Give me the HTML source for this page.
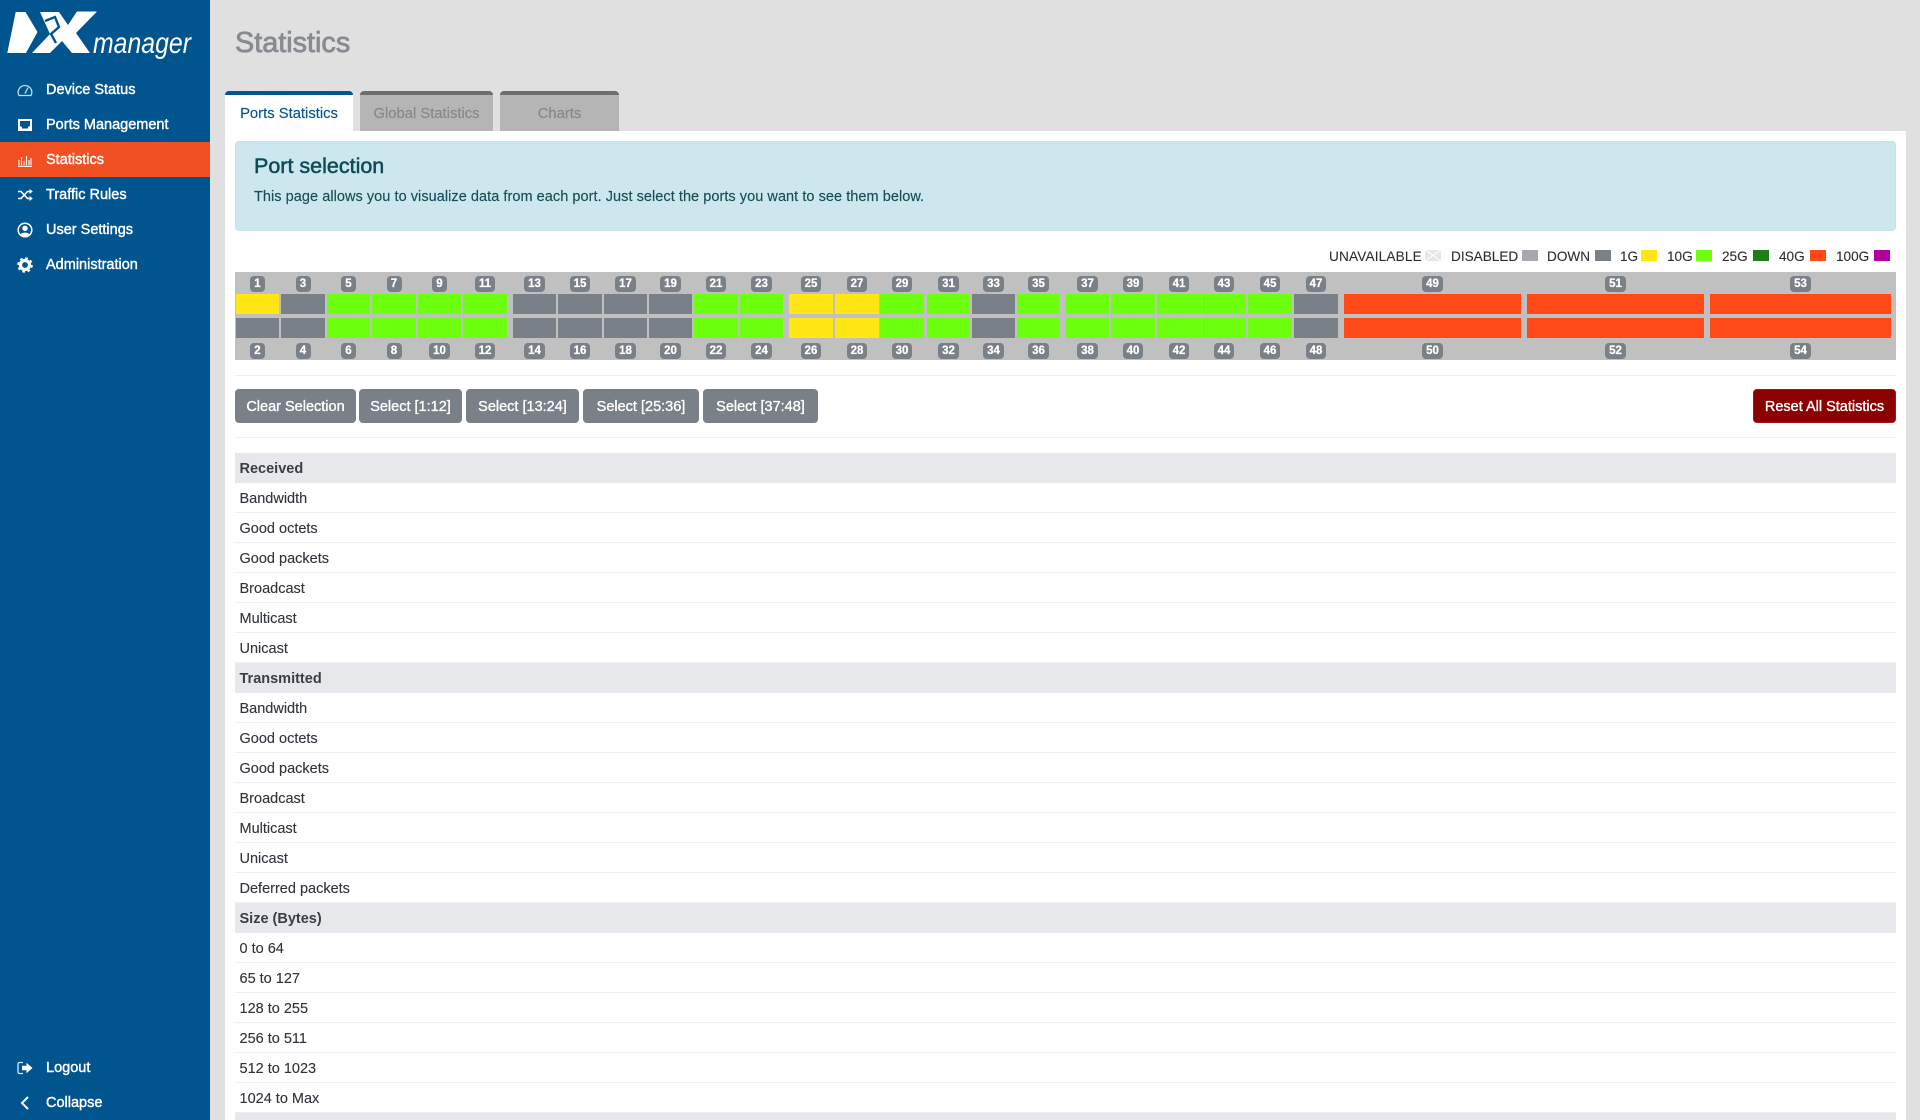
<!DOCTYPE html>
<html lang="en">
<head>
<meta charset="utf-8">
<title>Statistics</title>
<style>
*{box-sizing:border-box;margin:0;padding:0}
html,body{width:1920px;height:1120px;overflow:hidden;background:#e0e0e0;font-family:"Liberation Sans",sans-serif;font-size:14.5px;color:#2b3036}
#root{position:relative;width:1920px;height:1120px;overflow:hidden;background:#e0e0e0}
.abs{position:absolute}
#side{position:absolute;left:0;top:0;width:210px;height:1120px;background:#00558f}
.nav{position:absolute;left:0;width:210px;height:35px;line-height:37px;color:#fff;padding-left:46px;-webkit-text-stroke:.4px #fff;overflow:hidden}
.nav.on{background:#f15022}
.nav svg{position:absolute;left:17px;top:10px;width:16px;height:16px}
#title{position:absolute;left:235px;top:25px;font-size:28.8px;line-height:36px;color:#888c92;-webkit-text-stroke:.8px #888c92}
.tab{position:absolute;top:91px;height:40px;border-top:4px solid #6e6e6e;border-radius:4px 4px 0 0;background:#b5b5b5;color:#878787;text-align:center;line-height:38px;font-size:14.8px;-webkit-text-stroke:.15px #878787}
.tab.on{background:#fff;border-top-color:#00568f;color:#00568f;-webkit-text-stroke:.15px #00568f}
#panel{position:absolute;left:225px;top:131px;width:1681px;height:989px;background:#fff}
#alert{position:absolute;left:235px;top:141px;width:1661px;height:90px;background:#cce8ee;border:1px solid #bfe4ea;border-radius:4px;color:#1a4c58}
#alert h4{position:absolute;left:18px;top:10px;font-size:21.5px;line-height:28px;font-weight:400;color:#0c4a56;-webkit-text-stroke:.5px #0c4a56;white-space:nowrap}
#alert p{position:absolute;left:18px;top:46px;line-height:18px;white-space:nowrap;letter-spacing:.05px;-webkit-text-stroke:.15px #1a4c58}
.lg{position:absolute;top:248px;font-size:13.6px;line-height:18px;color:#2a2e33;white-space:nowrap;-webkit-text-stroke:.1px #2a2e33}
.sw{position:absolute;top:250px;width:16px;height:11px}
#bar{position:absolute;left:235px;top:272px;width:1661px;height:88px;background:#c0c0c0}
.c{position:absolute;top:276px;height:84px;display:flex;flex-direction:column;align-items:center}
.c b{display:block;height:16px;min-width:15px;padding:0 4px;line-height:16px;background:#7a8088;border-radius:4px;color:#fff;font-size:11.5px;font-weight:700;text-align:center;-webkit-text-stroke:.25px #fff}
.c i{display:block;width:100%;height:20px;background:#7a8088}
.c i.a{margin-top:2px}
.c i.z{margin-top:4px}
.c b.z{margin-top:5px}
.c i.g{background:#6cff0e}
.c i.y{background:#ffe614}
.c i.o{background:#ff4a17}
.hr{position:absolute;left:235px;width:1661px;height:1px;background:#edeef0}
.btn{position:absolute;top:389px;height:34px;line-height:36px;background:#7a8088;border-radius:4px;color:#fff;text-align:center;white-space:nowrap;font-size:14.5px;-webkit-text-stroke:.35px #fff;overflow:hidden}
.btn.r{background:#8b0000;border:1px solid #a3141c;line-height:34px}
#tbl{position:absolute;left:235px;top:453px;width:1661px}
#tbl div{height:30px;line-height:32px;padding-left:4.5px;border-bottom:1px solid #eceef1;color:#2f343a;-webkit-text-stroke:.12px #2f343a;overflow:hidden}
#tbl div.h{background:#e6e8ec;border-bottom:0;font-weight:700;color:#3a3f45;-webkit-text-stroke:0}
</style>
</head>
<body>
<div id="root">
<div id="side">
<svg class="abs" style="left:0;top:0" width="210" height="70" viewBox="0 0 210 70">
<polygon fill="#fff" points="15.7,12 25.500,12 37.500,32 26,53 7.300,53"/>
<polygon fill="#fff" points="40,12 59,12 68,25 77,11.500 97,11.500 76,33 90,53 72,53 62,41 50,53 32,53 50,34"/>
<polyline fill="none" stroke="#00558f" stroke-width="2.400" points="45,21 55,17 59,27 51,34 56,43"/>
<text x="93" y="53" font-family="Liberation Sans" font-style="italic" font-size="30" fill="#fff" textLength="98" lengthAdjust="spacingAndGlyphs">manager</text>
</svg>
<div class="nav" style="top:72px"><svg viewBox="0 0 16 16"><path d="M2 13.500A6.800 6.800 0 1 1 14 13.500ZM8 11.500 11 5.500" fill="none" stroke="#c6d9e8" stroke-width="1.300"/></svg>Device Status</div>
<div class="nav" style="top:107px"><svg viewBox="0 0 16 16"><rect x="1" y="2" width="14" height="12" fill="#fff"/><path d="M3 4h10v5l-2 1v1.500H5V10L3 9z" fill="#00558f"/></svg>Ports Management</div>
<div class="nav on" style="top:142px"><svg viewBox="0 0 16 16"><path d="M1 14.300h14M2 13V8M4.500 13V5M7 13V9M9.500 13V4M12 13V8M14 13V6" fill="none" stroke="#fff" stroke-width="1.100"/></svg>Statistics</div>
<div class="nav" style="top:177px"><svg viewBox="0 0 16 16"><path d="M1 4.500h3l6.500 7H13M1 11.500h3l6.500-7H13" fill="none" stroke="#fff" stroke-width="1.600"/><path d="M12.500 2l3.300 2.500-3.300 2.500zM12.500 9l3.300 2.500-3.300 2.500z" fill="#fff"/></svg>Traffic Rules</div>
<div class="nav" style="top:212px"><svg viewBox="0 0 16 16"><circle cx="8" cy="8" r="6.800" fill="none" stroke="#fff" stroke-width="1.500"/><circle cx="8" cy="6.300" r="2.700" fill="#fff"/><path d="M3.500 12.500C4.500 10 11.500 10 12.500 12.500L8 15z" fill="#fff"/></svg>User Settings</div>
<div class="nav" style="top:247px"><svg viewBox="0 0 16 16"><circle cx="8" cy="8" r="4.500" fill="none" stroke="#fff" stroke-width="3.200"/><circle cx="8" cy="8" r="6.600" fill="none" stroke="#fff" stroke-width="2.400" stroke-dasharray="2.600 2.580"/></svg>Administration</div>
<div class="nav" style="top:1050px"><svg viewBox="0 0 16 16"><path d="M6 2.500H2.500a1.500 1.500 0 0 0-1.500 1.500v8a1.500 1.500 0 0 0 1.500 1.500H6" fill="none" stroke="#dfe8ef" stroke-width="1.300"/><path d="M9.500 2.800 15.500 8l-6 5.200V10.300H5V5.700h4.500z" fill="#fff"/></svg>Logout</div>
<div class="nav" style="top:1085px"><svg viewBox="0 0 16 16"><path d="M11 2 5 8l6 6" fill="none" stroke="#fff" stroke-width="2"/></svg>Collapse</div>
</div>

<div id="title">Statistics</div>
<div id="panel"></div>
<div class="tab on" style="left:225px;width:128px">Ports Statistics</div>
<div class="tab" style="left:360px;width:133px">Global Statistics</div>
<div class="tab" style="left:500px;width:119px">Charts</div>

<div id="alert">
<h4>Port selection</h4>
<p>This page allows you to visualize data from each port. Just select the ports you want to see them below.</p>
</div>

<div class="lg" style="left:1329px;letter-spacing:.18px">UNAVAILABLE</div>
<svg class="sw" style="left:1425px" viewBox="0 0 16 11"><rect width="16" height="11" fill="#e4e6e8"/><path d="M0 0 16 11M16 0 0 11" stroke="#fff" stroke-width="1"/></svg>
<div class="lg" style="left:1451px">DISABLED</div><div class="sw" style="left:1522px;background:#a5a8b0"></div>
<div class="lg" style="left:1547px">DOWN</div><div class="sw" style="left:1595px;background:#7a8088"></div>
<div class="lg" style="left:1620px">1G</div><div class="sw" style="left:1641px;background:#ffe60f"></div>
<div class="lg" style="left:1667px">10G</div><div class="sw" style="left:1696px;background:#6cff0e"></div>
<div class="lg" style="left:1722px">25G</div><div class="sw" style="left:1753px;background:#1c7e16"></div>
<div class="lg" style="left:1779px">40G</div><div class="sw" style="left:1810px;background:#ff4a17"></div>
<div class="lg" style="left:1836px">100G</div><div class="sw" style="left:1874px;background:#b3009c"></div>

<div id="bar"></div>
<div class="c" style="left:236px;width:43px"><b>1</b><i class="a y"></i><i class="z"></i><b class="z">2</b></div>
<div class="c" style="left:281px;width:44px"><b>3</b><i class="a"></i><i class="z"></i><b class="z">4</b></div>
<div class="c" style="left:327px;width:43px"><b>5</b><i class="a g"></i><i class="z g"></i><b class="z">6</b></div>
<div class="c" style="left:372px;width:44px"><b>7</b><i class="a g"></i><i class="z g"></i><b class="z">8</b></div>
<div class="c" style="left:418px;width:43px"><b>9</b><i class="a g"></i><i class="z g"></i><b class="z">10</b></div>
<div class="c" style="left:463px;width:44px"><b>11</b><i class="a g"></i><i class="z g"></i><b class="z">12</b></div>
<div class="c" style="left:513px;width:43px"><b>13</b><i class="a"></i><i class="z"></i><b class="z">14</b></div>
<div class="c" style="left:558px;width:44px"><b>15</b><i class="a"></i><i class="z"></i><b class="z">16</b></div>
<div class="c" style="left:604px;width:43px"><b>17</b><i class="a"></i><i class="z"></i><b class="z">18</b></div>
<div class="c" style="left:649px;width:43px"><b>19</b><i class="a"></i><i class="z"></i><b class="z">20</b></div>
<div class="c" style="left:694px;width:44px"><b>21</b><i class="a g"></i><i class="z g"></i><b class="z">22</b></div>
<div class="c" style="left:740px;width:43px"><b>23</b><i class="a g"></i><i class="z g"></i><b class="z">24</b></div>
<div class="c" style="left:789px;width:44px"><b>25</b><i class="a y"></i><i class="z y"></i><b class="z">26</b></div>
<div class="c" style="left:835px;width:44px"><b>27</b><i class="a y"></i><i class="z y"></i><b class="z">28</b></div>
<div class="c" style="left:880px;width:44px"><b>29</b><i class="a g"></i><i class="z g"></i><b class="z">30</b></div>
<div class="c" style="left:927px;width:43px"><b>31</b><i class="a g"></i><i class="z g"></i><b class="z">32</b></div>
<div class="c" style="left:972px;width:43px"><b>33</b><i class="a"></i><i class="z"></i><b class="z">34</b></div>
<div class="c" style="left:1017px;width:43px"><b>35</b><i class="a g"></i><i class="z g"></i><b class="z">36</b></div>
<div class="c" style="left:1066px;width:43px"><b>37</b><i class="a g"></i><i class="z g"></i><b class="z">38</b></div>
<div class="c" style="left:1111px;width:44px"><b>39</b><i class="a g"></i><i class="z g"></i><b class="z">40</b></div>
<div class="c" style="left:1157px;width:44px"><b>41</b><i class="a g"></i><i class="z g"></i><b class="z">42</b></div>
<div class="c" style="left:1202px;width:44px"><b>43</b><i class="a g"></i><i class="z g"></i><b class="z">44</b></div>
<div class="c" style="left:1248px;width:44px"><b>45</b><i class="a g"></i><i class="z g"></i><b class="z">46</b></div>
<div class="c" style="left:1294px;width:44px"><b>47</b><i class="a"></i><i class="z"></i><b class="z">48</b></div>
<div class="c" style="left:1344px;width:177px"><b>49</b><i class="a o"></i><i class="z o"></i><b class="z">50</b></div>
<div class="c" style="left:1527px;width:177px"><b>51</b><i class="a o"></i><i class="z o"></i><b class="z">52</b></div>
<div class="c" style="left:1710px;width:181px"><b>53</b><i class="a o"></i><i class="z o"></i><b class="z">54</b></div>

<div class="hr" style="top:375px"></div>
<div class="btn" style="left:235px;width:121px">Clear Selection</div>
<div class="btn" style="left:359px;width:103px">Select [1:12]</div>
<div class="btn" style="left:466px;width:113px">Select [13:24]</div>
<div class="btn" style="left:583px;width:116px">Select [25:36]</div>
<div class="btn" style="left:703px;width:115px">Select [37:48]</div>
<div class="btn r" style="left:1753px;width:143px">Reset All Statistics</div>
<div class="hr" style="top:437px"></div>

<div id="tbl">
<div class="h">Received</div>
<div>Bandwidth</div>
<div>Good octets</div>
<div>Good packets</div>
<div>Broadcast</div>
<div>Multicast</div>
<div>Unicast</div>
<div class="h">Transmitted</div>
<div>Bandwidth</div>
<div>Good octets</div>
<div>Good packets</div>
<div>Broadcast</div>
<div>Multicast</div>
<div>Unicast</div>
<div>Deferred packets</div>
<div class="h">Size (Bytes)</div>
<div>0 to 64</div>
<div>65 to 127</div>
<div>128 to 255</div>
<div>256 to 511</div>
<div>512 to 1023</div>
<div>1024 to Max</div>
<div class="h" style="height:7px"></div>
</div>
</div>
</body>
</html>
